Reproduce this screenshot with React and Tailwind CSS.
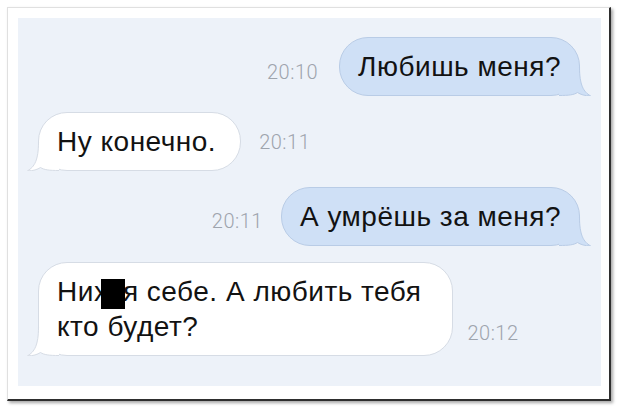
import React from "react";

const Tail = ({ side, fill, stroke }) => (
  <svg
    width="40"
    height="30"
    viewBox="0 0 40 30"
    className={
      side === "right"
        ? "absolute right-[-12px] bottom-[-1px]"
        : "absolute left-[-12px] bottom-[-1px] -scale-x-100"
    }
  >
    <path
      d="M28.5 1 C28.5 19 32.5 26 39.5 29.8 C34 30 29.5 28.5 26.5 26.5 C23 28.8 18 29.5 8 29.5 L8 20 L20 8 Z"
      fill={fill}
    />
    <path
      d="M28.5 1 C28.5 19 32.5 26 39.5 29.8 C34 30 29.5 28.5 26.5 26.5 C23 28.8 18 29.5 8 29.5"
      fill="none"
      stroke={stroke}
      strokeWidth="1"
    />
  </svg>
);

const Mine = ({ children }) => (
  <div className="relative rounded-[29px] border border-[#b9cce6] bg-[#cfe0f6] px-[18px] py-[11px]">
    <Tail side="right" fill="#cfe0f6" stroke="#b9cce6" />
    <span className="relative">{children}</span>
  </div>
);

const Theirs = ({ children, className = "" }) => (
  <div
    className={`relative rounded-[29px] border border-[#d6dce5] bg-white py-[11px] pl-[18px] ${className}`}
  >
    <Tail side="left" fill="#ffffff" stroke="#d6dce5" />
    <span className="relative">{children}</span>
  </div>
);

const Time = ({ children, className = "" }) => (
  <span
    className={`font-['Roboto','Liberation_Sans',sans-serif] text-[20px] font-light leading-[22px] tracking-[0.5px] text-[#9ea4ad] ${className}`}
  >
    {children}
  </span>
);

export default function App() {
  return (
    <div className="h-[407px] w-[620px] bg-white pl-[7px] pt-[7px]">
      <div className="h-[394px] w-[604px] border border-r-2 border-b-2 border-[#e0e0e0] border-r-[#2e2e2e] border-b-[#2e2e2e] bg-white pb-[13px] pl-[10px] pr-[8px] pt-[10px] shadow-[2px_2px_3px_rgba(0,0,0,0.35)]">
        <div className="flex h-full flex-col gap-[16px] bg-[#edf2f9] pl-[20px] pr-[21px] pt-[19px] font-['Liberation_Sans',Arial,sans-serif] text-[28px] leading-[35px] tracking-[0.5px] text-[#121212]">
          {/* message 1 */}
          <div className="flex items-end justify-end gap-[21px]">
            <Time className="mb-[13px]">20:10</Time>
            <Mine>Любишь меня?</Mine>
          </div>

          {/* message 2 */}
          <div className="flex items-end gap-[18px]">
            <Theirs className="pr-[24px]">Ну конечно.</Theirs>
            <Time className="mb-[18px]">20:11</Time>
          </div>

          {/* message 3 */}
          <div className="flex items-end justify-end gap-[18px]">
            <Time className="mb-[14px]">20:11</Time>
            <Mine>А умрёшь за меня?</Mine>
          </div>

          {/* message 4 */}
          <div className="flex items-end gap-[14px]">
            <Theirs className="pr-[31px]">
              Ни
              <span className="relative">
                ху
                <span className="absolute left-[7px] right-[-2px] top-[3px] bottom-[-2px] bg-black" />
              </span>
              я себе. А любить тебя
              <br />
              кто будет?
            </Theirs>
            <Time className="mb-[12px]">20:12</Time>
          </div>
        </div>
      </div>
    </div>
  );
}
